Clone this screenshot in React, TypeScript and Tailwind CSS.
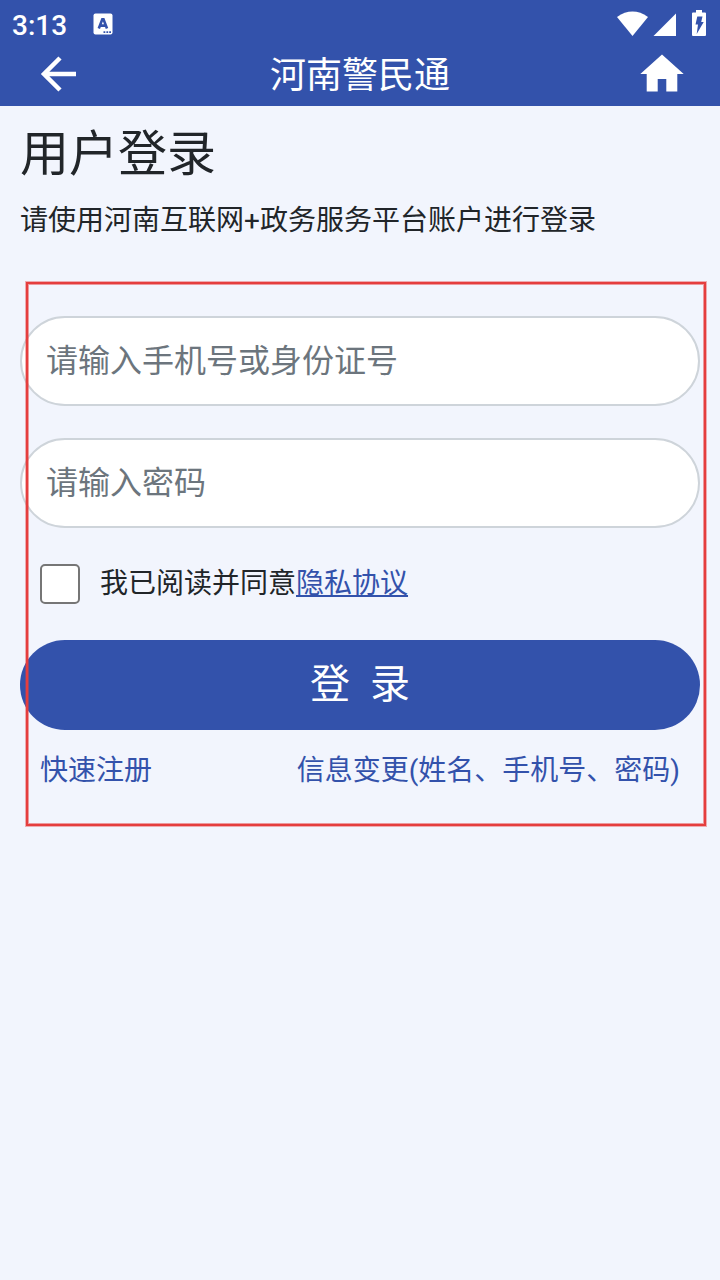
import { useState } from 'react';

const inputClass =
  'h-[90px] w-full rounded-full border-2 border-[#ced4da] bg-white px-6 text-[32px] text-[#212529] outline-none placeholder:text-[#6c757d] placeholder:opacity-100';

function StatusBar() {
  return (
    <div className="flex h-[46px] items-center justify-between pl-3 pr-3">
      <div className="flex items-center">
        <span className="mt-1.5 w-[81px] text-[28px] font-medium leading-none">3:13</span>
        <svg width="20" height="22" viewBox="0 0 20 22" className="mt-0.5">
          <rect x="0.5" y="0.5" width="19" height="21" rx="2" fill="#fff" />
          <path d="M5.8 15.5 9.3 6.3H10.5L14 15.5M7.2 12.6h5.4" fill="none" stroke="#3352ab" strokeWidth="2.6" />
          <path d="M10.5 18.3h1.8v1.8h-1.8zM13.4 18.3h1.8v1.8h-1.8zM16.2 18.3h1.8v1.8h-1.8z" fill="#3352ab" />
        </svg>
      </div>
      <svg width="91" height="28" viewBox="0 0 91 28" fill="#fff">
        <path d="M0 8Q15.5 -2.8 31 8L15.5 27Z" />
        <path d="M59 4.5V27H36.5Z" />
        <path d="M79 1h6v2.5h3q1 0 1 1V26q0 1-1 1H76q-1 0-1-1V4.5q0-1 1-1h3z" />
        <path d="M80.3 7.5h5.2l-1.3 5.5h2.5L79.7 25l1.3-9.5h-2.5z" fill="#3352ab" />
      </svg>
    </div>
  );
}

function NavBar() {
  return (
    <div className="flex h-[60px] items-center justify-between pb-1 pl-[35px] pr-9">
      <button type="button" aria-label="返回">
        <svg width="44" height="44" viewBox="0 0 44 44" fill="none" stroke="#fff" strokeWidth="4.5">
          <path d="M41 22H9M25 6 9 22l16 16" />
        </svg>
      </button>
      <h1 className="mt-1 pl-px text-[36px] leading-none">河南警民通</h1>
      <button type="button" aria-label="首页">
        <svg width="44" height="44" viewBox="0 0 44 44" fill="#fff">
          <path d="M22 2.5 43.7 22H37.3V39.5H26.3V27H17.7V39.5H6.7V22H0.3Z" />
        </svg>
      </button>
    </div>
  );
}

export default function App() {
  const [agreed, setAgreed] = useState(false);

  return (
    <div className="relative min-h-[1280px] w-[720px] bg-[#f2f5fd] font-['Roboto','Noto_Sans_CJK_SC',sans-serif] text-[#212529]">
      <header className="h-[106px] bg-[#3352ab] text-white">
        <StatusBar />
        <NavBar />
      </header>

      <main className="px-5 pt-[17px]">
        <h2 className="text-[49px] leading-[64px]">用户登录</h2>
        <p className="mt-[13px] text-[28px] leading-[42px]">请使用河南互联网+政务服务平台账户进行登录</p>

        <form className="mt-[74px]" onSubmit={(e) => e.preventDefault()}>
          <div className="flex flex-col gap-8">
            <input type="text" placeholder="请输入手机号或身份证号" className={inputClass} />
            <input type="password" placeholder="请输入密码" className={inputClass} />
          </div>
          <label className="mt-9 flex h-10 items-center gap-5 pl-5">
            <input
              type="checkbox"
              checked={agreed}
              onChange={(e) => setAgreed(e.target.checked)}
              className="size-10 appearance-none rounded-[5px] border-2 border-[#767676] bg-white checked:bg-[#3352ab]"
            />
            <span className="text-[28px]">
              我已阅读并同意
              <a href="#" className="text-[#3352ab] underline">隐私协议</a>
            </span>
          </label>
          <button type="submit" className="mt-9 h-[90px] w-full rounded-full bg-[#3352ab] text-[40px] text-white">
            登&nbsp;&nbsp;录
          </button>
        </form>

        <div className="mt-5 flex justify-between px-5 text-[28px] leading-[42px] text-[#3352ab]">
          <a href="#">快速注册</a>
          <a href="#">信息变更(姓名、手机号、密码)</a>
        </div>
      </main>

      {/* highlighted form area */}
      <div className="pointer-events-none absolute left-[25px] top-[281px] h-[546px] w-[682px] border border-[#e53e3e]/40">
        <div className="h-full border-2 border-[#e53e3e]">
          <div className="h-full border border-[#e53e3e]/50" />
        </div>
      </div>
    </div>
  );
}
